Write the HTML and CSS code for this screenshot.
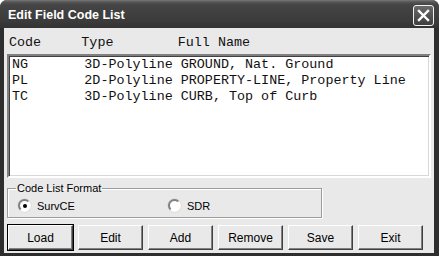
FILE: index.html
```html
<!DOCTYPE html>
<html lang="en">
<head>
    <meta charset="UTF-8">
    <title>Edit Field Code List</title>
    <link rel="stylesheet" href="styles.css">
</head>
<body>
    <div class="window">
        <div class="titlebar">
            <span class="title">Edit Field Code List</span>
            <button class="close" aria-label="Close">
                <svg width="13" height="13" viewBox="0 0 13 13">
                    <path d="M2 2 L11 11 M11 2 L2 11" stroke="#fff" stroke-width="2.4" stroke-linecap="square"/>
                </svg>
            </button>
        </div>

        <div class="client">
            <pre class="list-header">Code     Type        Full Name</pre>

            <div class="listbox">
                <pre class="row">NG       3D-Polyline GROUND, Nat. Ground</pre>
                <pre class="row">PL       2D-Polyline PROPERTY-LINE, Property Line</pre>
                <pre class="row">TC       3D-Polyline CURB, Top of Curb</pre>
            </div>

            <fieldset class="group">
                <legend>Code List Format</legend>
                <label class="radio radio-first"><span class="dot checked"></span>SurvCE</label>
                <label class="radio"><span class="dot"></span>SDR</label>
            </fieldset>

            <div class="buttons">
                <button class="btn btn-default">Load</button>
                <button class="btn">Edit</button>
                <button class="btn">Add</button>
                <button class="btn">Remove</button>
                <button class="btn">Save</button>
                <button class="btn">Exit</button>
            </div>
        </div>
    </div>
</body>
</html>
```

FILE: styles.css
```css
html, body {
    margin: 0;
    padding: 0;
    background: #ffffff;
}

.window {
    width: 439px;
    height: 256px;
    background: #2e2e2e;
    border-radius: 7px 7px 0 0;
    display: flex;
    flex-direction: column;
    overflow: hidden;
}

.titlebar {
    height: 28px;
    flex: none;
    display: flex;
    align-items: center;
    justify-content: space-between;
    padding: 0 5px 0 8px;
    background: linear-gradient(#7a7a7a 0px, #555 2px, #444 5px, #3c3c3c 20px, #333 28px);
}

.title {
    font-family: "Liberation Sans", Arial, sans-serif;
    font-weight: bold;
    font-size: 12.5px;
    color: #ffffff;
    margin-top: 2px;
}

.close {
    width: 21px;
    height: 21px;
    margin-top: 3px;
    padding: 0;
    border: 1px solid #f2f2f2;
    border-radius: 3px;
    background: linear-gradient(#6a6a6a, #3e3e3e);
    display: flex;
    align-items: center;
    justify-content: center;
}

.client {
    flex: 1;
    margin: 0 5px 3px 4px;
    background: #e9e9e9;
    padding: 7px 3px 0 3px;
    display: flex;
    flex-direction: column;
}

pre {
    margin: 0;
    font-family: "Liberation Mono", "Courier New", monospace;
    font-size: 13.4px;
    line-height: 16px;
    color: #111;
}

.list-header {
    padding-left: 2px;
    height: 16px;
}

.listbox {
    margin-top: 3px;
    height: 118px;
    flex: none;
    background: #ffffff;
    border: 2px solid;
    border-color: #808080 #ffffff #ffffff #808080;
    box-shadow: inset 1px 1px 0 #404040, inset -1px -1px 0 #d8d8d8;
    padding: 1px 3px;
}

.group {
    margin: 4px 0 0 0;
    width: 313px;
    flex: none;
    padding: 4px 0 5px 0;
    border: 1px solid #9c9c9c;
    box-shadow: 1px 1px 0 #fff, inset 1px 1px 0 #fff;
    display: flex;
    align-items: center;
    font-family: "Liberation Sans", Arial, sans-serif;
    font-size: 11px;
}

.group legend {
    padding: 0 1px;
    margin-left: 8px;
    font-size: 11px;
    line-height: 13px;
}

.radio {
    display: flex;
    align-items: center;
    gap: 6px;
    height: 13px;
    margin-left: 10px;
}

.radio-first {
    width: 140px;
}

.dot {
    width: 9px;
    height: 9px;
    border-radius: 50%;
    background: #fff;
    border: 2px solid;
    border-color: #808080 #ffffff #ffffff #808080;
    box-shadow: 0 0 0 0.5px #d0d0d0;
    position: relative;
}

.dot.checked::after {
    content: "";
    position: absolute;
    left: 2.5px;
    top: 2.5px;
    width: 4px;
    height: 4px;
    border-radius: 50%;
    background: #000;
}

.buttons {
    margin-top: 7px;
    display: flex;
    gap: 5px;
}

.btn {
    width: 65px;
    height: 25px;
    background: #e9e9e9;
    border: 1px solid;
    border-color: #ffffff #404040 #404040 #ffffff;
    box-shadow: inset -1px -1px 0 #808080;
    font-family: "Liberation Sans", Arial, sans-serif;
    font-size: 12px;
    color: #000;
    padding: 0;
}

.btn-default {
    outline: 1px solid #000;
    outline-offset: 0;
    margin-left: 1px;
}
```
